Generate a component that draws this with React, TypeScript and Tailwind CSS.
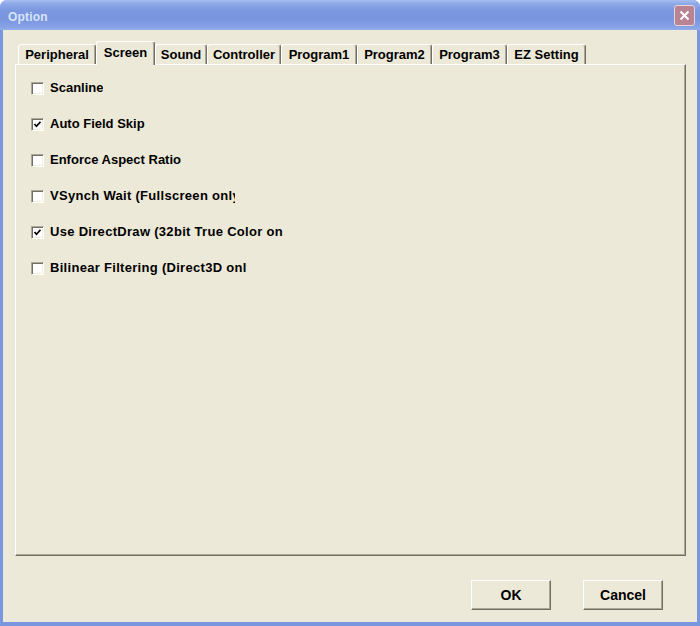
import React, { useState } from "react";

type Row = { label: string; checked: boolean; clip?: string };

// the long labels are cut off by their fixed-width static controls, as in the original dialog
const rows: Row[] = [
	{ label: "Scanline", checked: false },
	{ label: "Auto Field Skip", checked: true },
	{ label: "Enforce Aspect Ratio", checked: false },
	{ label: "VSynch Wait (Fullscreen only)", checked: false, clip: "w-[185px] tracking-[0.3px]" },
	{ label: "Use DirectDraw (32bit True Color only)", checked: true, clip: "w-[233px] tracking-[0.3px]" },
	{ label: "Bilinear Filtering (Direct3D only)", checked: false, clip: "w-[197px] tracking-[0.3px]" },
];

// tab widths measured from the screenshot
const tabs = [
	{ name: "Peripheral", w: "w-[78px]" },
	{ name: "Screen", w: "w-[59px]" },
	{ name: "Sound", w: "w-[52px]" },
	{ name: "Controller", w: "w-[74px]" },
	{ name: "Program1", w: "w-[76px]" },
	{ name: "Program2", w: "w-[75px]" },
	{ name: "Program3", w: "w-[75px]" },
	{ name: "EZ Setting", w: "w-[79px]" },
];

const CheckBox = ({ checked, onClick }: { checked: boolean; onClick: () => void }) => (
	<div
		onClick={onClick}
		className="w-[13px] h-[13px] shrink-0 bg-white border-t border-l border-t-[#aca899] border-l-[#aca899] border-r border-b border-r-white border-b-white shadow-[inset_1px_1px_0_#716f64,inset_-1px_-1px_0_#f1efe2] flex items-center justify-center">
		{checked && (
			<svg width="9" height="9" viewBox="0 0 9 9">
				<polyline points="1.5,4 3.5,6.2 7.5,1.8" fill="none" stroke="#000" strokeWidth="1.7" />
			</svg>
		)}
	</div>
);

const Button = ({ children }: { children: React.ReactNode }) => (
	<button className="w-[80px] h-[30px] bg-[#ece9d8] border-t border-l border-white border-r border-b border-r-[#716f64] border-b-[#716f64] shadow-[inset_-1px_-1px_0_#aca899] text-[14px] font-bold text-black flex items-center justify-center">
		{children}
	</button>
);

const App = () => {
	const [active, setActive] = useState("Screen");
	const [checks, setChecks] = useState(rows.map((r) => r.checked));

	const toggle = (i: number) => {
		setChecks(checks.map((c, j) => (j === i ? !c : c)));
	};

	return (
		<div className="w-[700px] h-[626px] bg-[#7a96df] rounded-t-[7px] flex flex-col overflow-hidden font-['Liberation_Sans',Arial,sans-serif] select-none">
			{/* title bar */}
			<div className="h-[30px] shrink-0 flex items-center justify-between pl-[8px] pr-[5px] bg-[linear-gradient(to_bottom,#a9bdf0_0%,#8faae8_12%,#7b97df_35%,#7a96df_65%,#87a2e4_90%,#93aeea_100%)]">
				<span className="mt-[3px] text-[12px] font-bold text-[#d8e4f8] tracking-[0.2px]">Option</span>
				<div className="w-[21px] h-[21px] rounded-[3px] border border-[#e6d6dc] bg-[#b98391] flex items-center justify-center">
					<svg width="11" height="11" viewBox="0 0 11 11">
						<path d="M1.5 1.5 L9.5 9.5 M9.5 1.5 L1.5 9.5" stroke="#fff" strokeWidth="2" />
					</svg>
				</div>
			</div>

			{/* client area */}
			<div className="flex-1 mx-[3px] mb-[4px] bg-[#ece9d8] flex flex-col pl-[12px] pr-[11px] pt-[11px]">
				<div className="h-[23px] flex items-end pl-[3px] text-[13px] font-bold text-black">
					{tabs.map((t) => {
						const sel = t.name === active;
						return (
							<div
								key={t.name}
								onClick={() => setActive(t.name)}
								className={
									sel
										? `${t.w} relative z-10 h-[24px] -mb-px bg-[#ece9d8] border-t border-l border-white border-r border-r-[#716f64] shadow-[inset_-1px_0_0_#aca899] rounded-t-[3px] flex justify-center pt-[1px]`
										: `${t.w} h-[20px] bg-[#ece9d8] border-t border-l border-white border-r border-r-[#716f64] shadow-[inset_-1px_0_0_#aca899] rounded-t-[3px] flex justify-center`
								}>
								{t.name}
							</div>
						);
					})}
				</div>

				<div className="h-[492px] shrink-0 border-t border-l border-white border-r border-b border-r-[#716f64] border-b-[#716f64] shadow-[inset_-1px_-1px_0_#aca899] pl-[15px] pt-[16px] flex flex-col gap-[22px]">
					{rows.map((r, i) => (
						<div key={r.label} className="flex items-center h-[14px] gap-[6px]">
							<CheckBox checked={checks[i]} onClick={() => toggle(i)} />
							<span className={`${r.clip ?? ""} overflow-hidden whitespace-nowrap text-[13px] font-bold text-black leading-[14px]`}>
								{r.label}
							</span>
						</div>
					))}
				</div>

				<div className="mt-[24px] flex justify-end gap-[32px] pr-[23px]">
					<Button>OK</Button>
					<Button>Cancel</Button>
				</div>
			</div>
		</div>
	);
};

export default App;
